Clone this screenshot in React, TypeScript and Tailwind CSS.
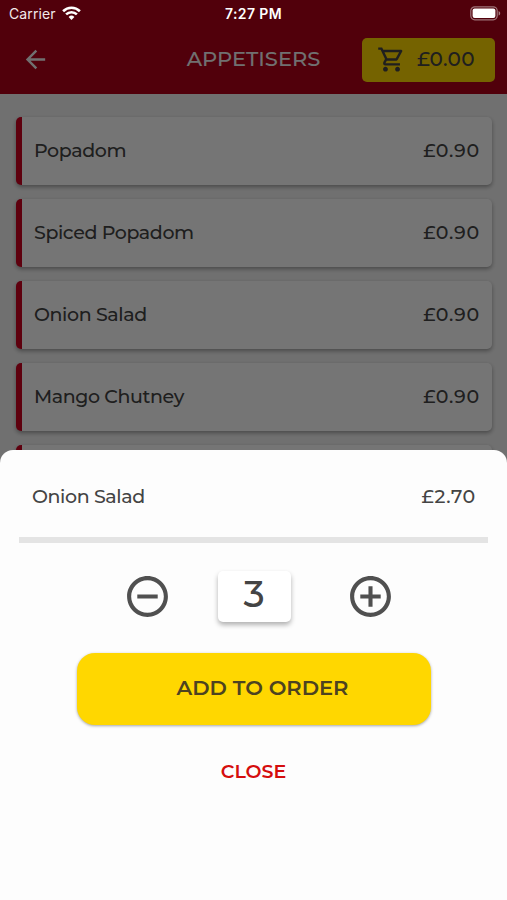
import {
  MdAddCircleOutline,
  MdArrowBack,
  MdOutlineShoppingCart,
  MdRemoveCircleOutline,
} from "react-icons/md";

type MenuItem = { name: string; price: string };

const items: MenuItem[] = [
  { name: "Popadom", price: "£0.90" },
  { name: "Spiced Popadom", price: "£0.90" },
  { name: "Onion Salad", price: "£0.90" },
  { name: "Mango Chutney", price: "£0.90" },
  { name: "", price: "" },
];

function StatusBar() {
  return (
    <div className="absolute inset-x-0 top-0 z-20 grid h-7 grid-cols-3 items-center px-[6px] font-['Inter',sans-serif] text-white">
      <div className="flex items-center gap-[6px] pl-[3px]">
        <span className="text-[14px] leading-none tracking-[0.1px] text-[#f3e9ea]">Carrier</span>
        <svg className="-mt-[2px]" width="19" height="15" viewBox="0 0 19 15" fill="none" stroke="currentColor" strokeWidth="2.6">
          <path d="M1.1 5.2a12 12 0 0 1 16.8 0" />
          <path d="M4.1 8.4a7.7 7.7 0 0 1 10.8 0" />
          <path d="M9.5 14 6.6 11a4.2 4.2 0 0 1 5.8 0z" fill="currentColor" stroke="none" />
        </svg>
      </div>
      <span className="text-center text-[14px] font-semibold leading-none tracking-[0.4px]">7:27 PM</span>
      <svg className="-mt-[2px] justify-self-end" width="31" height="15" viewBox="0 0 31 15">
        <rect x="0.8" y="0.8" width="26.4" height="13" rx="4" fill="none" stroke="#fff" strokeOpacity="0.45" strokeWidth="1.2" />
        <rect x="2.6" y="2.6" width="22.8" height="9.4" rx="2" fill="#fff" />
        <path d="M28.6 5v4.6c1-.4 1.6-1.3 1.6-2.3S29.6 5.4 28.6 5z" fill="#fff" fillOpacity="0.5" />
      </svg>
    </div>
  );
}

function Header() {
  return (
    <header className="grid h-[94px] grid-cols-[1fr_auto_1fr] items-center bg-[#b0001a] px-3 pt-[25px]">
      <MdArrowBack className="ml-[9px] size-[29px] text-[#f5f5f5]" />
      <h1 className="pb-[2px] text-[21px] font-medium leading-none text-[#f5f5f5]">APPETISERS</h1>
      <div className="flex h-11 w-[133px] items-center gap-[11px] justify-self-end rounded-[5px] bg-[#ffd700] pl-[15px] text-[#444]">
        <MdOutlineShoppingCart className="size-[29px] shrink-0" />
        <span className="pb-px text-[20px] font-medium leading-none tracking-[0.3px]">£0.00</span>
      </div>
    </header>
  );
}

function MenuCard({ name, price }: MenuItem) {
  return (
    <li className="flex h-[68px] shrink-0 items-center justify-between rounded-[5px] border-l-[6px] border-[#cc0020] bg-white pb-[2px] pl-3 pr-3 text-[19px] font-medium leading-none text-[#444] shadow-[0_2px_4px_rgba(0,0,0,0.35)]">
      <span className="tracking-[-0.4px]">{name}</span>
      <span className="tracking-[0.8px]">{price}</span>
    </li>
  );
}

function OrderSheet() {
  return (
    <section className="absolute inset-x-0 bottom-0 z-10 flex h-[450px] flex-col items-center rounded-t-[13px] bg-[#fdfdfd] text-[#444]">
      <div className="flex h-[87px] w-full items-center justify-between pl-8 pr-[31px] pt-[6px] text-[19px] font-medium leading-none">
        <span className="tracking-[-0.4px]">Onion Salad</span>
        <span className="tracking-[0.7px]">£2.70</span>
      </div>
      <div className="h-[6px] w-[469px] bg-[#e4e4e4]" />
      <div className="ml-[10px] mt-7 flex w-[272px] items-center justify-between">
        <MdRemoveCircleOutline className="size-[49px] text-[#505050]" />
        <div className="mr-[9px] flex h-[51px] w-[73px] items-start justify-center rounded-[5px] bg-white pt-[3px] text-[37px] font-medium leading-[40px] shadow-[0_3px_5px_rgba(0,0,0,0.3)]">
          3
        </div>
        <MdAddCircleOutline className="size-[49px] text-[#505050]" />
      </div>
      <button className="mt-[31px] h-[72px] w-[354px] rounded-[18px] bg-[#ffd700] pb-1 pl-[18px] text-[21px] font-semibold leading-none text-[#4d4320] shadow-[0_1px_3px_rgba(0,0,0,0.35)]">
        ADD TO ORDER
      </button>
      <button className="mt-[37px] text-[19px] font-semibold leading-[20px] text-[#d50d0d]">CLOSE</button>
    </section>
  );
}

export default function App() {
  return (
    <div className="relative h-[900px] w-[507px] overflow-hidden bg-[#f4f4f4] font-['Montserrat','Inter',sans-serif]">
      <StatusBar />
      <Header />
      <ul className="flex flex-col gap-[14px] pl-4 pr-[15px] pt-[23px]">
        {items.map((item, index) => (
          <MenuCard key={index} name={item.name} price={item.price} />
        ))}
      </ul>
      <div className="absolute inset-0 bg-black/54" />
      <OrderSheet />
    </div>
  );
}
